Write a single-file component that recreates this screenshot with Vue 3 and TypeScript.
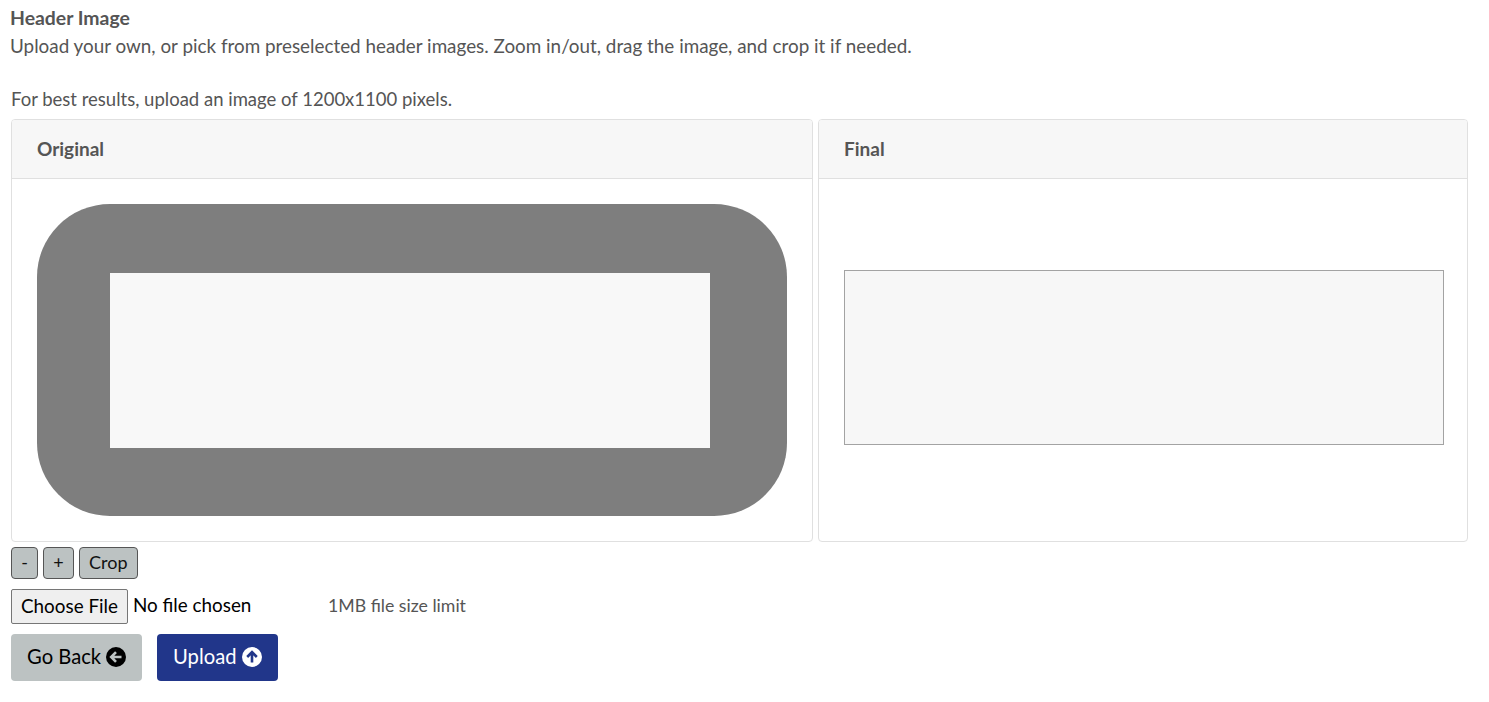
<script setup lang="ts">
const zoomButtons = ['-', '+', 'Crop']
</script>

<template>
  <main class="page">
    <div class="intro">
      <h2 class="title">Header Image</h2>
      <p class="hint">Upload your own, or pick from preselected header images. Zoom in/out, drag the image, and crop it if needed.</p>
      <p class="hint best">For best results, upload an image of 1200x1100 pixels.</p>
    </div>

    <div class="cards">
      <section class="card original">
        <header class="card-head">Original</header>
        <div class="card-body">
          <div class="cropper">
            <div class="viewport"></div>
          </div>
        </div>
      </section>
      <section class="card final">
        <header class="card-head">Final</header>
        <div class="card-body final-body">
          <div class="preview"></div>
        </div>
      </section>
    </div>

    <div class="zoom-row">
      <button v-for="label in zoomButtons" :key="label" type="button" class="tool">{{ label }}</button>
    </div>

    <div class="file-row">
      <input class="file" type="file" />
      <span class="limit">1MB file size limit</span>
    </div>

    <div class="actions">
      <button type="button" class="action back">
        <span class="label">Go Back</span>
        <svg class="icon" viewBox="0 0 20 20" width="20" height="20">
          <circle cx="10" cy="10" r="10" fill="#000" />
          <path d="M15.5 10H5.5M10 5.2 5.2 10l4.800 4.800" fill="none" stroke="#bcc2c2" stroke-width="2.600" />
        </svg>
      </button>
      <button type="button" class="action upload">
        <span class="label">Upload</span>
        <svg class="icon" viewBox="0 0 20 20" width="20" height="20">
          <circle cx="10" cy="10" r="10" fill="#fff" />
          <path d="M10 15.500V5.500M5.200 10 10 5.200l4.800 4.800" fill="none" stroke="#21368a" stroke-width="2.600" />
        </svg>
      </button>
    </div>
  </main>
</template>

<style>
body {
  background: #fff;
}
</style>

<style scoped>
.page {
  padding: 5px 0 0 11px;
  font-family: Lato, "Open Sans", sans-serif;
  font-size: 18.85px;
  line-height: 26.4px;
  color: #555;
}

.intro {
  margin-left: -1px;
}

.title {
  margin: 0 0 2px;
  font-size: 19.4px;
  line-height: 26.4px;
  font-weight: 700;
}

.hint {
  margin: 0;
}

.best {
  margin: 26px 0 0 1px;
  font-size: 18.5px;
}

.cards {
  display: flex;
  gap: 5px;
  margin-top: 7px;
}

.card {
  box-sizing: border-box;
  border: 1px solid #e0e0e0;
  border-radius: 4px;
  background: #fff;
  overflow: hidden;
}

.original {
  width: 802px;
}

.final {
  width: 650px;
}

.card-head {
  box-sizing: border-box;
  height: 59px;
  padding: 16px 25px 0;
  background: #f7f7f7;
  border-bottom: 1px solid #e0e0e0;
  font-size: 19px;
  font-weight: 700;
}

.card-body {
  padding: 25px;
}

.cropper {
  width: 750px;
  height: 312px;
  padding: 69px 77px 68px 73px;
  box-sizing: border-box;
  border-radius: 73px;
  background: #7e7e7e;
}

.viewport {
  height: 175px;
  background: #f8f8f8;
}

.final-body {
  padding: 91px 24px 0 25px;
}

.preview {
  width: 600px;
  height: 175px;
  box-sizing: border-box;
  border: 1px solid #a3a3a3;
  background: #f7f7f7;
}

.zoom-row {
  display: flex;
  gap: 5px;
  margin-top: 5px;
}

.tool {
  height: 32px;
  padding: 0 9.2px 2px;
  border: 1px solid #555;
  border-radius: 4px;
  background: #bcc2c2;
  color: #111;
  font: inherit;
  font-size: 18px;
}

.file-row {
  display: flex;
  align-items: center;
  margin-top: 10px;
  height: 35px;
}

.file {
  width: 317px;
  color: #000;
  font: inherit;
}

.file::file-selector-button {
  height: 35px;
  margin-right: 5px;
  padding: 0 9px 2px;
  border: 1px solid #767676;
  border-radius: 2px;
  background: #efefef;
  color: #000;
  font: inherit;
}

.limit {
  margin-bottom: 2px;
  font-size: 17.7px;
}

.actions {
  display: flex;
  gap: 15px;
  margin-top: 10px;
}

.action {
  display: flex;
  align-items: center;
  gap: 5px;
  height: 47px;
  padding: 0 16px 2px;
  border: 0;
  border-radius: 4px;
  font: inherit;
  font-size: 20.2px;
  line-height: 22px;
}

.label {
  margin-bottom: 2px;
}

.back {
  background: #bcc2c2;
  color: #000;
}

.upload {
  gap: 6px;
  background: #21368a;
  color: #fff;
}

.icon {
  display: block;
  flex: none;
}
</style>
